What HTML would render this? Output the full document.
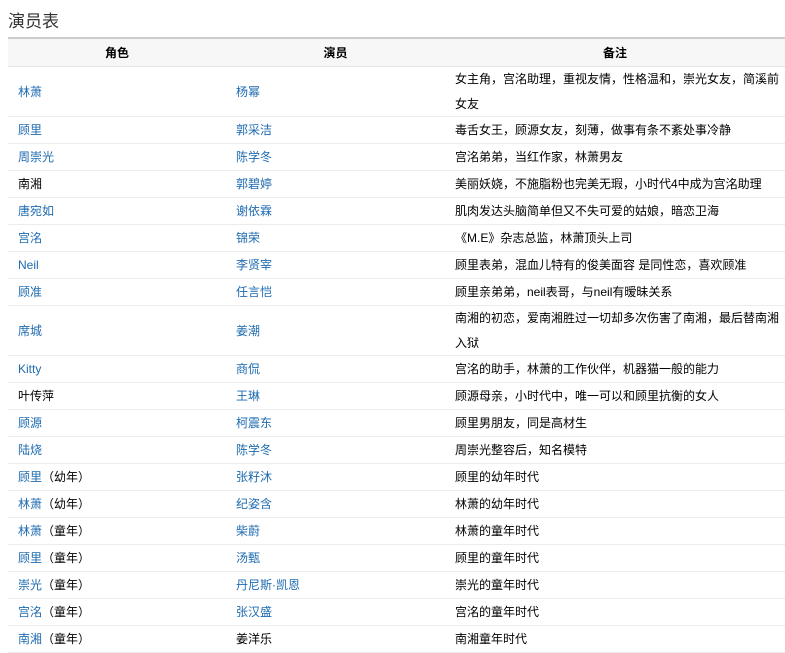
<!DOCTYPE html>
<html><head><meta charset="utf-8"><style>
body{margin:0;background:#fff;font-family:"Liberation Sans","Noto Sans CJK SC",sans-serif;font-size:12px;color:#000;}
h2{margin:0;position:absolute;left:8px;top:7px;font-size:17px;font-weight:normal;color:#333;}
table{position:absolute;left:8px;top:37px;width:777px;border-collapse:collapse;table-layout:fixed;border-top:2px solid #ccc;}
th{background:#f7f7f7;height:27px;font-weight:bold;font-size:12px;border-bottom:1px solid #e4e4e4;padding:0;}
td{padding:1px 4px 1px 10px;line-height:24px;border-bottom:1px solid #ececec;vertical-align:middle;}
td.w{line-height:24.5px;padding:0 4px 0 10px;}
a{color:#1e6bb0;text-decoration:none;}
</style></head><body>
<h2>演员表</h2>
<table>
<colgroup><col style="width:218px"><col style="width:219px"><col style="width:340px"></colgroup>
<tr><th>角色</th><th>演员</th><th>备注</th></tr>
<tr><td><a>林萧</a></td><td><a>杨幂</a></td><td class="w">女主角，宫洺助理，重视友情，性格温和，崇光女友，简溪前女友</td></tr>
<tr><td><a>顾里</a></td><td><a>郭采洁</a></td><td>毒舌女王，顾源女友，刻薄，做事有条不紊处事冷静</td></tr>
<tr><td><a>周崇光</a></td><td><a>陈学冬</a></td><td>宫洺弟弟，当红作家，林萧男友</td></tr>
<tr><td>南湘</td><td><a>郭碧婷</a></td><td>美丽妖娆，不施脂粉也完美无瑕，小时代4中成为宫洺助理</td></tr>
<tr><td><a>唐宛如</a></td><td><a>谢依霖</a></td><td>肌肉发达头脑简单但又不失可爱的姑娘，暗恋卫海</td></tr>
<tr><td><a>宫洺</a></td><td><a>锦荣</a></td><td>《M.E》杂志总监，林萧顶头上司</td></tr>
<tr><td><a>Neil</a></td><td><a>李贤宰</a></td><td>顾里表弟，混血儿特有的俊美面容 是同性恋，喜欢顾准</td></tr>
<tr><td><a>顾准</a></td><td><a>任言恺</a></td><td>顾里亲弟弟，neil表哥，与neil有暧昧关系</td></tr>
<tr><td><a>席城</a></td><td><a>姜潮</a></td><td class="w">南湘的初恋，爱南湘胜过一切却多次伤害了南湘，最后替南湘入狱</td></tr>
<tr><td><a>Kitty</a></td><td><a>商侃</a></td><td>宫洺的助手，林萧的工作伙伴，机器猫一般的能力</td></tr>
<tr><td>叶传萍</td><td><a>王琳</a></td><td>顾源母亲，小时代中，唯一可以和顾里抗衡的女人</td></tr>
<tr><td><a>顾源</a></td><td><a>柯震东</a></td><td>顾里男朋友，同是高材生</td></tr>
<tr><td><a>陆烧</a></td><td><a>陈学冬</a></td><td>周崇光整容后，知名模特</td></tr>
<tr><td><a>顾里</a>（幼年）</td><td><a>张籽沐</a></td><td>顾里的幼年时代</td></tr>
<tr><td><a>林萧</a>（幼年）</td><td><a>纪姿含</a></td><td>林萧的幼年时代</td></tr>
<tr><td><a>林萧</a>（童年）</td><td><a>柴蔚</a></td><td>林萧的童年时代</td></tr>
<tr><td><a>顾里</a>（童年）</td><td><a>汤甄</a></td><td>顾里的童年时代</td></tr>
<tr><td><a>崇光</a>（童年）</td><td><a>丹尼斯·凯恩</a></td><td>崇光的童年时代</td></tr>
<tr><td><a>宫洺</a>（童年）</td><td><a>张汉盛</a></td><td>宫洺的童年时代</td></tr>
<tr><td><a>南湘</a>（童年）</td><td>姜洋乐</td><td>南湘童年时代</td></tr>
</table>
</body></html>
